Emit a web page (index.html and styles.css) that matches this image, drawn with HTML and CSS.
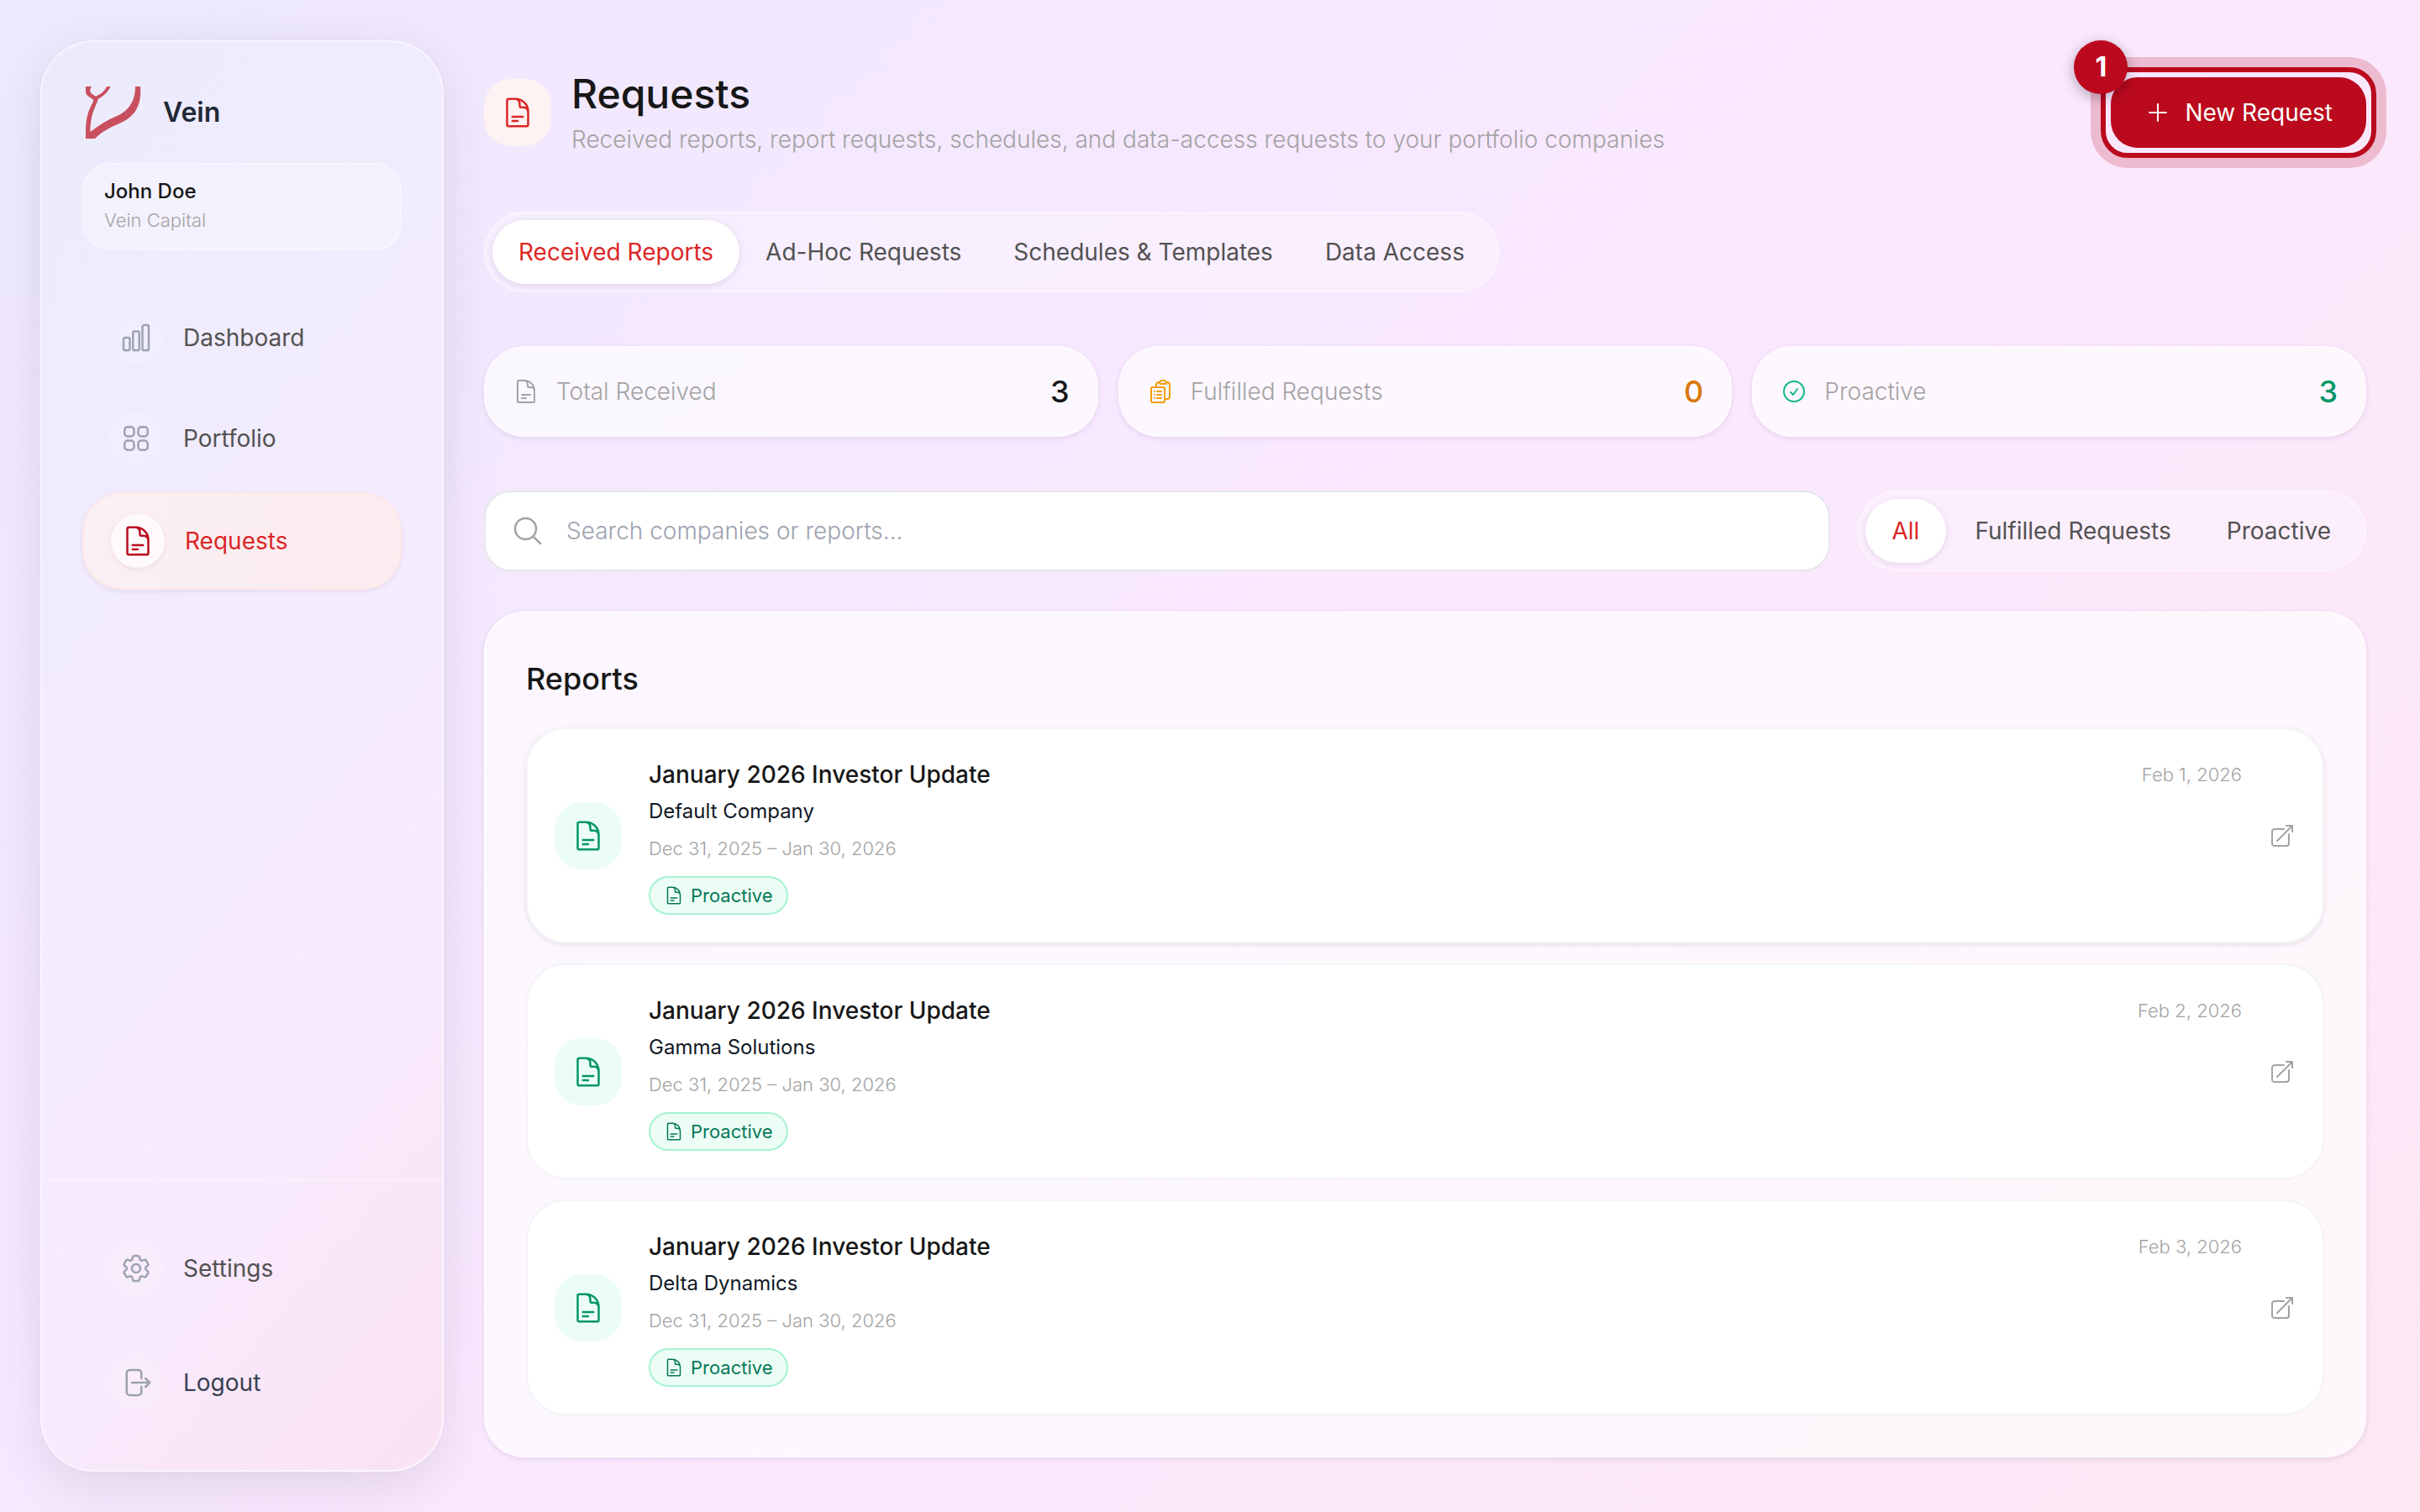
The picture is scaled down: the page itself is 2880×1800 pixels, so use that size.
FILE: index.html
```html
<!DOCTYPE html>
<html lang="en">
<head>
<meta charset="utf-8">
<title>Requests – Vein</title>
<link rel="stylesheet" href="styles.css">
</head>
<body>
<svg class="sprite" aria-hidden="true">
  <symbol id="i-doc" viewBox="0 0 24 24"><path d="M19.5 14.25v-2.625a3.375 3.375 0 0 0-3.375-3.375h-1.5A1.125 1.125 0 0 1 13.5 7.125v-1.5a3.375 3.375 0 0 0-3.375-3.375H8.25m0 12.75h7.5m-7.5 3H12M10.5 2.25H5.625c-.621 0-1.125.504-1.125 1.125v17.25c0 .621.504 1.125 1.125 1.125h12.75c.621 0 1.125-.504 1.125-1.125V11.25a9 9 0 0 0-9-9Z"/></symbol>
  <symbol id="i-chart" viewBox="0 0 24 24"><path d="M3 13.125C3 12.504 3.504 12 4.125 12h2.25c.621 0 1.125.504 1.125 1.125v6.75C7.5 20.496 6.996 21 6.375 21h-2.25A1.125 1.125 0 0 1 3 19.875v-6.75ZM9.75 8.625c0-.621.504-1.125 1.125-1.125h2.25c.621 0 1.125.504 1.125 1.125v11.25c0 .621-.504 1.125-1.125 1.125h-2.25a1.125 1.125 0 0 1-1.125-1.125V8.625ZM16.5 4.125c0-.621.504-1.125 1.125-1.125h2.25C20.496 3 21 3.504 21 4.125v15.75c0 .621-.504 1.125-1.125 1.125h-2.25a1.125 1.125 0 0 1-1.125-1.125V4.125Z"/></symbol>
  <symbol id="i-grid" viewBox="0 0 24 24"><path d="M3.75 6A2.25 2.25 0 0 1 6 3.75h2.25A2.25 2.25 0 0 1 10.5 6v2.25a2.25 2.25 0 0 1-2.25 2.25H6a2.25 2.25 0 0 1-2.25-2.25V6ZM3.75 15.75A2.25 2.25 0 0 1 6 13.5h2.25a2.25 2.25 0 0 1 2.25 2.25V18a2.25 2.25 0 0 1-2.25 2.25H6A2.25 2.25 0 0 1 3.75 18v-2.25ZM13.5 6a2.25 2.25 0 0 1 2.25-2.25H18A2.25 2.25 0 0 1 20.25 6v2.25A2.25 2.25 0 0 1 18 10.5h-2.25a2.25 2.25 0 0 1-2.25-2.25V6ZM13.5 15.75a2.25 2.25 0 0 1 2.25-2.25H18a2.25 2.25 0 0 1 2.25 2.25V18A2.25 2.25 0 0 1 18 20.25h-2.25A2.25 2.25 0 0 1 13.5 18v-2.25Z"/></symbol>
  <symbol id="i-cog" viewBox="0 0 24 24"><path d="M9.594 3.94c.09-.542.56-.94 1.11-.94h2.593c.55 0 1.02.398 1.11.94l.213 1.281c.063.374.313.686.645.87.074.04.147.083.22.127.325.196.72.257 1.075.124l1.217-.456a1.125 1.125 0 0 1 1.37.49l1.296 2.247a1.125 1.125 0 0 1-.26 1.431l-1.003.827c-.293.241-.438.613-.43.992a7.723 7.723 0 0 1 0 .255c-.008.378.137.75.43.991l1.004.827c.424.35.534.955.26 1.43l-1.298 2.247a1.125 1.125 0 0 1-1.369.491l-1.217-.456c-.355-.133-.75-.072-1.076.124a6.47 6.47 0 0 1-.22.128c-.331.183-.581.495-.644.869l-.213 1.281c-.09.543-.56.94-1.11.94h-2.594c-.55 0-1.019-.398-1.11-.94l-.213-1.281c-.062-.374-.312-.686-.644-.87a6.52 6.52 0 0 1-.22-.127c-.325-.196-.72-.257-1.076-.124l-1.217.456a1.125 1.125 0 0 1-1.369-.49l-1.297-2.247a1.125 1.125 0 0 1 .26-1.431l1.004-.827c.292-.24.437-.613.43-.991a6.932 6.932 0 0 1 0-.255c.007-.38-.138-.751-.43-.992l-1.004-.827a1.125 1.125 0 0 1-.26-1.43l1.297-2.247a1.125 1.125 0 0 1 1.37-.491l1.216.456c.356.133.751.072 1.076-.124.072-.044.146-.086.22-.128.332-.183.582-.495.644-.869l.214-1.28Z"/><path d="M15 12a3 3 0 1 1-6 0 3 3 0 0 1 6 0Z"/></symbol>
  <symbol id="i-logout" viewBox="0 0 24 24"><path d="M15.75 9V5.25A2.25 2.25 0 0 0 13.5 3h-6a2.25 2.25 0 0 0-2.25 2.25v13.5A2.25 2.25 0 0 0 7.5 21h6a2.25 2.25 0 0 0 2.25-2.25V15m3 0 3-3m0 0-3-3m3 3H9"/></symbol>
  <symbol id="i-search" viewBox="0 0 24 24"><path d="m21 21-5.197-5.197m0 0A7.5 7.5 0 1 0 5.196 5.196a7.5 7.5 0 0 0 10.607 10.607Z"/></symbol>
  <symbol id="i-clip" viewBox="0 0 24 24"><path d="M9 12h3.75M9 15h3.75M9 18h3.75m3 .75H18a2.25 2.25 0 0 0 2.25-2.25V6.108c0-1.135-.845-2.098-1.976-2.192a48.424 48.424 0 0 0-1.123-.08m-5.801 0c-.065.21-.1.433-.1.664 0 .414.336.75.75.75h4.5a.75.75 0 0 0 .75-.75 2.25 2.25 0 0 0-.1-.664m-5.8 0A2.251 2.251 0 0 1 13.5 2.25H15c1.012 0 1.867.668 2.15 1.586m-5.8 0c-.376.023-.75.05-1.124.08C9.095 4.01 8.25 4.973 8.25 6.108V8.25m0 0H4.875c-.621 0-1.125.504-1.125 1.125v11.25c0 .621.504 1.125 1.125 1.125h9.75c.621 0 1.125-.504 1.125-1.125V9.375c0-.621-.504-1.125-1.125-1.125H8.25ZM6.75 12h.008v.008H6.75V12Zm0 3h.008v.008H6.75V15Zm0 3h.008v.008H6.75V18Z"/></symbol>
  <symbol id="i-check" viewBox="0 0 24 24"><path d="M9 12.75 11.25 15 15 9.75M21 12a9 9 0 1 1-18 0 9 9 0 0 1 18 0Z"/></symbol>
  <symbol id="i-open" viewBox="0 0 24 24"><path d="M13.5 6H5.25A2.25 2.25 0 0 0 3 8.25v10.5A2.25 2.25 0 0 0 5.25 21h10.5A2.25 2.25 0 0 0 18 18.75V10.5m-10.5 6L21 3m0 0h-5.25M21 3v5.25"/></symbol>
  <symbol id="i-plus" viewBox="0 0 24 24"><path d="M12 4.5v15m7.5-7.5h-15"/></symbol>
</svg>

<div class="app">
  <aside class="sidebar">
    <div class="sidebar-top">
      <div class="brand">
        <svg class="logo" viewBox="0 0 72 72" aria-hidden="true">
          <path d="M4 5H11C8 9 8.500 13.500 16 16.500C23 14 27 9.500 29 5H33.500C31 11 26 16 18.500 20C19 24 9 36 9.500 59C20 51 26 47 37 42C52 36 63 26 63 5H69C71 29 61 42 44 49C32 54 23 59 15 67H4C4 52 4 42 9 31C12 24 13.500 23 13 21C10 17.500 4 16 4 11.500C4 9 4 7 4 5Z"/>
        </svg>
        <span class="brand-name">Vein</span>
      </div>
      <div class="user">
        <span class="user-name">John Doe</span>
        <span class="user-org">Vein Capital</span>
      </div>
      <nav class="nav">
        <a class="nav-item" href="#"><span class="nav-icon"><svg class="icon"><use href="#i-chart"/></svg></span>Dashboard</a>
        <a class="nav-item" href="#"><span class="nav-icon"><svg class="icon"><use href="#i-grid"/></svg></span>Portfolio</a>
        <a class="nav-item active" href="#"><span class="nav-icon"><svg class="icon"><use href="#i-doc"/></svg></span>Requests</a>
      </nav>
    </div>
    <div class="sidebar-foot">
      <a class="nav-item" href="#"><span class="nav-icon"><svg class="icon"><use href="#i-cog"/></svg></span>Settings</a>
      <button class="nav-item logout" type="button"><span class="nav-icon"><svg class="icon"><use href="#i-logout"/></svg></span>Logout</button>
    </div>
  </aside>

  <main class="main">
    <header class="page-head">
      <span class="tile tile-red"><svg class="icon"><use href="#i-doc"/></svg></span>
      <div class="page-title">
        <h1>Requests</h1>
        <p>Received reports, report requests, schedules, and data-access requests to your portfolio companies</p>
      </div>
      <div class="callout">
        <button class="btn-primary" type="button"><svg class="icon icon-md"><use href="#i-plus"/></svg>New Request</button>
        <span class="callout-ring"></span>
        <span class="callout-badge">1</span>
      </div>
    </header>

    <div class="segment section-tabs">
      <button class="seg on" type="button">Received Reports</button>
      <button class="seg" type="button">Ad-Hoc Requests</button>
      <button class="seg" type="button">Schedules &amp; Templates</button>
      <button class="seg" type="button">Data Access</button>
    </div>

    <section class="stats">
      <div class="stat"><svg class="icon icon-md"><use href="#i-doc"/></svg><span class="stat-label">Total Received</span><span class="stat-value">3</span></div>
      <div class="stat amber"><svg class="icon icon-md"><use href="#i-clip"/></svg><span class="stat-label">Fulfilled Requests</span><span class="stat-value">0</span></div>
      <div class="stat green"><svg class="icon icon-md"><use href="#i-check"/></svg><span class="stat-label">Proactive</span><span class="stat-value">3</span></div>
    </section>

    <div class="filters">
      <label class="search">
        <svg class="icon"><use href="#i-search"/></svg>
        <input type="text" placeholder="Search companies or reports..." aria-label="Search companies or reports">
      </label>
      <div class="segment filter-tabs">
        <button class="seg on" type="button">All</button>
        <button class="seg" type="button">Fulfilled Requests</button>
        <button class="seg" type="button">Proactive</button>
      </div>
    </div>

    <section class="panel">
      <h2>Reports</h2>
      <div class="reports">
        <article class="report raised">
          <span class="tile tile-green"><svg class="icon"><use href="#i-doc"/></svg></span>
          <div class="report-body">
            <div class="report-head"><h3>January 2026 Investor Update</h3><time class="muted">Feb 1, 2026</time></div>
            <p class="company">Default Company</p>
            <p class="muted">Dec 31, 2025 – Jan 30, 2026</p>
            <span class="tag"><svg class="icon icon-sm"><use href="#i-doc"/></svg>Proactive</span>
          </div>
          <a class="open" href="#" aria-label="Open report"><svg class="icon icon-md"><use href="#i-open"/></svg></a>
        </article>
        <article class="report">
          <span class="tile tile-green"><svg class="icon"><use href="#i-doc"/></svg></span>
          <div class="report-body">
            <div class="report-head"><h3>January 2026 Investor Update</h3><time class="muted">Feb 2, 2026</time></div>
            <p class="company">Gamma Solutions</p>
            <p class="muted">Dec 31, 2025 – Jan 30, 2026</p>
            <span class="tag"><svg class="icon icon-sm"><use href="#i-doc"/></svg>Proactive</span>
          </div>
          <a class="open" href="#" aria-label="Open report"><svg class="icon icon-md"><use href="#i-open"/></svg></a>
        </article>
        <article class="report">
          <span class="tile tile-green"><svg class="icon"><use href="#i-doc"/></svg></span>
          <div class="report-body">
            <div class="report-head"><h3>January 2026 Investor Update</h3><time class="muted">Feb 3, 2026</time></div>
            <p class="company">Delta Dynamics</p>
            <p class="muted">Dec 31, 2025 – Jan 30, 2026</p>
            <span class="tag"><svg class="icon icon-sm"><use href="#i-doc"/></svg>Proactive</span>
          </div>
          <a class="open" href="#" aria-label="Open report"><svg class="icon icon-md"><use href="#i-open"/></svg></a>
        </article>
      </div>
    </section>
  </main>
</div>
</body>
</html>
```
FILE: styles.css
```css
*, *::before, *::after { box-sizing: border-box; }

body {
  margin: 0;
  min-height: 100vh;
  font-family: Inter, "Liberation Sans", sans-serif;
  font-size: 28px;
  line-height: 40px;
  color: #171717;
  background: linear-gradient(135deg, #ede9fe 0%, #fae8ff 50%, #fce7f3 100%);
}

h1, h2, h3, p { margin: 0; }
button, input { font: inherit; color: inherit; }
button { border: 0; background: none; padding: 0; cursor: pointer; }
a { color: inherit; text-decoration: none; }

.sprite { position: absolute; width: 0; height: 0; }
.icon {
  width: 40px;
  height: 40px;
  flex: none;
  fill: none;
  stroke: currentColor;
  stroke-width: 1.5;
  stroke-linecap: round;
  stroke-linejoin: round;
}
.icon-md { width: 32px; height: 32px; }
.icon-sm { width: 24px; height: 24px; }

.app {
  display: flex;
  gap: 48px;
  min-height: 100vh;
  padding: 48px 64px 48px 48px;
}

/* Sidebar */
.sidebar {
  width: 480px;
  flex: none;
  display: flex;
  flex-direction: column;
  justify-content: space-between;
  border: 2px solid rgba(255, 255, 255, 0.5);
  border-radius: 64px;
  background: linear-gradient(130deg, #ebebfc 0%, #f3ecfe 45%, #f8eafd 72%, #fae2f2 100%);
  background-clip: padding-box;
  box-shadow: 0 16px 64px rgba(0, 0, 0, 0.1);
}
.sidebar-top { padding: 48px; }
.brand { display: flex; align-items: center; gap: 24px; height: 72px; }
.logo { width: 72px; height: 72px; fill: #c8505e; }
.brand-name { font-size: 32px; font-weight: 600; color: #1f2937; }
.user {
  display: flex;
  flex-direction: column;
  margin-top: 24px;
  padding: 14px 24px 18px;
  border: 2px solid rgba(255, 255, 255, 0.3);
  border-radius: 32px;
  background: rgba(255, 255, 255, 0.3);
}
.user-name { font-size: 24px; line-height: 36px; font-weight: 500; }
.user-org { font-size: 22px; line-height: 32px; font-weight: 300; color: #a3a3a3; }

.nav { display: flex; flex-direction: column; gap: 8px; margin-top: 48px; }
.nav-item {
  display: flex;
  align-items: center;
  gap: 24px;
  padding: 24px 32px;
  border-radius: 48px;
  color: #525252;
}
.nav-icon {
  display: grid;
  place-items: center;
  width: 64px;
  height: 64px;
  border-radius: 50%;
  background: rgba(255, 255, 255, 0.15);
  color: #9ca3af;
}
.nav-item.active {
  border: 2px solid #fde8e8;
  background: linear-gradient(100deg, #fbf0f4, #fbecef);
  box-shadow: 0 2px 6px rgba(60, 20, 60, 0.08);
  color: #dc2626;
}
.active .nav-icon {
  background: #fefafb;
  color: #bb0a1e;
  box-shadow: 0 2px 6px rgba(60, 20, 60, 0.08);
}
.sidebar-foot {
  display: flex;
  flex-direction: column;
  gap: 24px;
  padding: 48px;
  border-top: 2px solid rgba(255, 255, 255, 0.3);
}
.nav-item.logout { color: #374151; }

/* Page header */
.main { flex: 1; min-width: 0; display: flex; flex-direction: column; }
.page-head { display: flex; align-items: center; gap: 24px; height: 172px; }
.tile {
  display: grid;
  place-items: center;
  width: 80px;
  height: 80px;
  flex: none;
  border-radius: 32px;
}
.tile-red { background: #fef2f2; color: #dc2626; }
.tile-green { background: #ecfdf5; color: #059669; }
.page-title { flex: 1; }
.page-title h1 { font-size: 48px; line-height: 64px; font-weight: 500; }
.page-title p { line-height: 44px; font-weight: 300; color: #a3a3a3; }

.callout { position: relative; }
.btn-primary {
  display: flex;
  align-items: center;
  gap: 16px;
  padding: 22px 40px;
  border-radius: 32px;
  background: #bb0a1e;
  color: #fff;
}
.callout-ring {
  position: absolute;
  inset: -12px;
  border: 6px solid #bb0a1e;
  border-radius: 32px;
  box-shadow: 0 0 0 12px rgba(187, 10, 30, 0.2);
  pointer-events: none;
}
.callout-badge {
  position: absolute;
  left: -44px;
  top: -44px;
  width: 64px;
  height: 64px;
  border-radius: 50%;
  background: #bb0a1e;
  color: #fff;
  font-size: 32px;
  line-height: 64px;
  font-weight: 700;
  text-align: center;
  box-shadow: 0 4px 16px rgba(0, 0, 0, 0.3);
}

/* Segmented controls */
.segment {
  display: flex;
  padding: 8px;
  border: 2px solid rgba(255, 255, 255, 0.3);
  border-radius: 48px;
  background: rgba(255, 255, 255, 0.3);
}
.seg {
  padding: 18px 32px;
  border-radius: 40px;
  color: #525252;
  white-space: nowrap;
}
.seg.on {
  background: #fff;
  color: #dc2626;
  box-shadow: 0 2px 8px rgba(60, 20, 90, 0.12);
}
.section-tabs { align-self: flex-start; margin-top: 32px; }
.section-tabs .seg { padding: 18px 31px; }
.filter-tabs { gap: 2px; }

/* Stats */
.stats { display: grid; grid-template-columns: repeat(3, 1fr); gap: 24px; margin-top: 64px; }
.stat {
  display: flex;
  align-items: center;
  gap: 20px;
  padding: 32px;
  border: 2px solid rgba(255, 255, 255, 0.3);
  border-radius: 48px;
  background: rgba(255, 255, 255, 0.65);
  box-shadow: 0 2px 6px rgba(60, 20, 90, 0.1);
  color: #a3a3a3;
}
.stat-label { flex: 1; font-weight: 300; color: #a3a3a3; }
.stat-value { font-size: 36px; font-weight: 500; color: #171717; }
.amber { color: #f59e0b; }
.amber .stat-value { color: #d97706; }
.green { color: #10b981; }
.green .stat-value { color: #059669; }

/* Search and filter */
.filters { display: flex; gap: 32px; margin-top: 64px; }
.search {
  flex: 1;
  display: flex;
  align-items: center;
  gap: 26px;
  padding: 0 30px;
  border: 2px solid #e5e7eb;
  border-radius: 32px;
  background: #fff;
  color: #a3a3a3;
}
.search input {
  flex: 1;
  min-width: 0;
  border: 0;
  padding: 0;
  outline: 0;
  background: none;
  color: #171717;
}
.search input::placeholder { color: #9ca3af; font-weight: 300; opacity: 1; }

/* Reports */
.panel {
  margin-top: 48px;
  padding: 48px;
  border: 2px solid rgba(255, 255, 255, 0.4);
  border-radius: 48px;
  background: rgba(255, 255, 255, 0.65);
  box-shadow: 0 2px 6px rgba(60, 20, 90, 0.1);
}
.panel h2 { font-size: 36px; line-height: 60px; font-weight: 500; }
.reports { display: flex; flex-direction: column; gap: 24px; margin-top: 28px; }
.report {
  display: flex;
  align-items: center;
  gap: 32px;
  padding: 32px;
  border: 2px solid #f3f4f6;
  border-radius: 48px;
  background: #fff;
}
.raised { box-shadow: 0 2px 6px rgba(60, 20, 60, 0.1); }
.report-body { flex: 1; }
.report-head { display: flex; justify-content: space-between; }
.report h3 { font-size: 28px; line-height: 44px; font-weight: 500; }
.company { font-size: 24px; line-height: 44px; color: #111827; }
.muted { font-size: 22px; line-height: 44px; font-weight: 300; color: #a3a3a3; }
.tag {
  display: inline-flex;
  align-items: center;
  gap: 8px;
  height: 46px;
  margin-top: 11px;
  padding: 0 16px;
  border: 2px solid #a7f3d0;
  border-radius: 24px;
  background: #ecfdf5;
  color: #047857;
  font-size: 22px;
  vertical-align: top;
}
.open { display: flex; color: #a3a3a3; }
```
